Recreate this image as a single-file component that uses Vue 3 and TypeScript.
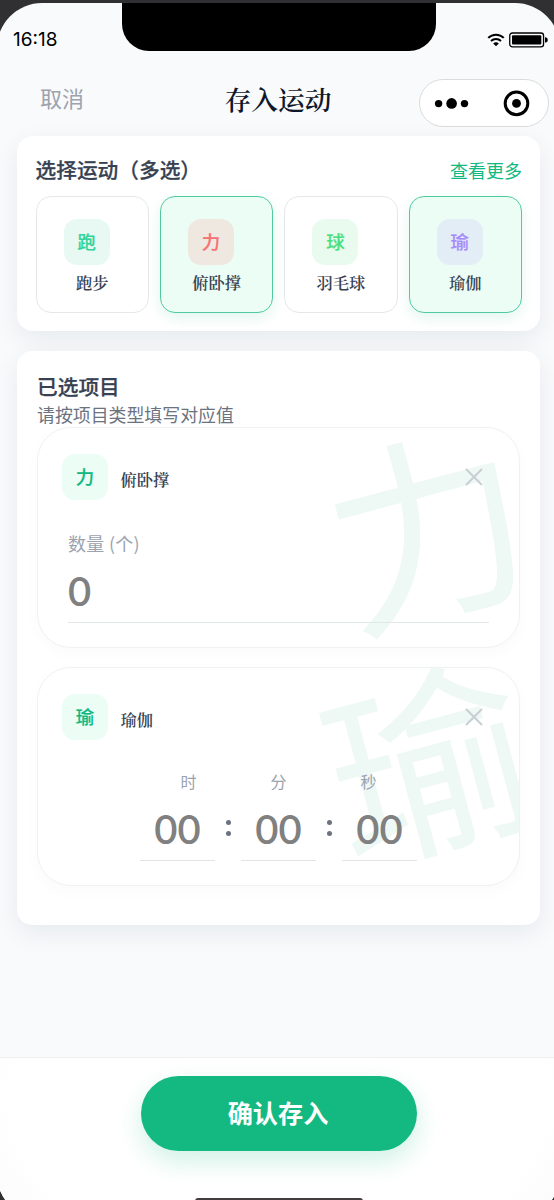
<script setup lang="ts">
import { ref } from 'vue'

interface Sport {
  glyph: string
  name: string
  tone: string
  selected: boolean
}

interface TimeUnit {
  label: string
  value: string
}

const sports = ref<Sport[]>([
  { glyph: '跑', name: '跑步', tone: 'mint', selected: false },
  { glyph: '力', name: '俯卧撑', tone: 'coral', selected: true },
  { glyph: '球', name: '羽毛球', tone: 'green', selected: false },
  { glyph: '瑜', name: '瑜伽', tone: 'violet', selected: true },
])

const units: TimeUnit[] = [
  { label: '时', value: '00' },
  { label: '分', value: '00' },
  { label: '秒', value: '00' },
]

function toggle(sport: Sport) {
  sport.selected = !sport.selected
}
</script>

<template>
  <div class="device">
    <div class="screen">
      <div class="status">
        <span class="clock">16:18</span>
        <div class="notch"></div>
        <div class="signals">
          <svg class="wifi" viewBox="0 0 18 14" width="18" height="14">
            <path d="M1.2 4.9C5.6 .6 12.4 .6 16.8 4.9" fill="none" stroke="#000" stroke-width="2" />
            <path d="M4 8C6.9 5.2 11.1 5.2 14 8" fill="none" stroke="#000" stroke-width="2" />
            <path d="M6.2 10.4C7.7 8.9 10.3 8.9 11.8 10.4L9 13.2Z" fill="#000" />
          </svg>
          <svg class="battery" viewBox="0 0 40 16" width="40" height="16">
            <rect x=".75" y="1" width="33.8" height="13.8" rx="2.6" fill="none" stroke="#000" stroke-width="1.3" />
            <rect x="3" y="3.2" width="29.3" height="9.4" rx="1" />
            <path d="M36 5.2h.8q2 .5 2 2.7t-2 2.7H36z" />
          </svg>
        </div>
      </div>

      <header class="nav">
        <span class="cancel">取消</span>
        <h1 class="title">存入运动</h1>
        <div class="capsule">
          <svg viewBox="0 0 127 46" width="127" height="46">
            <circle cx="18.6" cy="24.6" r="3.7" />
            <circle cx="31.6" cy="24.4" r="5.3" />
            <circle cx="44.5" cy="24.6" r="3.7" />
            <circle cx="96.5" cy="24.4" r="11.3" fill="none" stroke="#000" stroke-width="3" />
            <circle cx="96.5" cy="24.4" r="4.4" />
          </svg>
        </div>
      </header>

      <section class="card picker">
        <div class="picker-head">
          <h2 class="heading">选择运动（多选）</h2>
          <span class="more">查看更多</span>
        </div>
        <div class="tiles">
          <button
            v-for="sport in sports"
            :key="sport.name"
            class="tile"
            :class="{ selected: sport.selected }"
            type="button"
            @click="toggle(sport)"
          >
            <span class="badge" :class="sport.tone">{{ sport.glyph }}</span>
            <span class="tile-name">{{ sport.name }}</span>
          </button>
        </div>
      </section>

      <section class="card chosen">
        <h2 class="heading">已选项目</h2>
        <p class="hint">请按项目类型填写对应值</p>

        <article class="item count">
          <span class="watermark">力</span>
          <div class="item-head">
            <span class="badge plain">力</span>
            <span class="item-name">俯卧撑</span>
            <svg class="close" viewBox="0 0 18 18" width="18" height="18">
              <path d="M1 1L17 17M17 1L1 17" />
            </svg>
          </div>
          <div class="count-field">
            <span class="count-label">数量 (个)</span>
            <span class="number">0</span>
          </div>
        </article>

        <article class="item duration">
          <span class="watermark">瑜</span>
          <div class="item-head">
            <span class="badge plain">瑜</span>
            <span class="item-name">瑜伽</span>
            <svg class="close" viewBox="0 0 18 18" width="18" height="18">
              <path d="M1 1L17 17M17 1L1 17" />
            </svg>
          </div>
          <div class="unit-labels">
            <span v-for="unit in units" :key="unit.label">{{ unit.label }}</span>
          </div>
          <div class="unit-fields">
            <template v-for="(unit, index) in units" :key="unit.label">
              <span v-if="index > 0" class="colon"><i></i><i></i></span>
              <span class="number">{{ unit.value }}</span>
            </template>
          </div>
        </article>
      </section>

      <footer class="bottom">
        <button class="confirm" type="button">确认存入</button>
        <div class="home"></div>
      </footer>
    </div>
  </div>
</template>

<style>
body {
  margin: 0;
  background: #303033;
}
</style>

<style scoped>
* {
  box-sizing: border-box;
}

.device {
  width: 554px;
  height: 1200px;
  overflow: hidden;
  background: #303033;
  font-family: 'Noto Sans CJK SC', 'Liberation Sans', sans-serif;
}

.screen {
  display: flex;
  flex-direction: column;
  height: 1216px;
  margin: 3px -6px 0 -3px;
  padding: 0 6px 0 3px;
  overflow: hidden;
  border-radius: 45px;
  background: #f8fafc;
}

.status {
  display: grid;
  grid-template-columns: 122px 314px 118px;
  grid-template-rows: 48px;
  height: 48px;
}

.clock {
  padding-left: 13px;
  font: 400 19px/74px Inter, sans-serif;
  color: #000;
}

.notch {
  background: #000;
  border-radius: 0 0 27px 27px;
}

.signals {
  display: flex;
  justify-content: flex-end;
  gap: 4px;
  padding: 29px 5px 0 0;
}

.wifi {
  margin-top: 1px;
}

.nav {
  display: grid;
  grid-template-columns: 178px 200px 1fr;
  align-items: center;
  height: 85px;
  padding: 18px 5.5px 0 0;
}

.cancel {
  padding-left: 40px;
  margin-top: -12px;
  font-size: 22px;
  line-height: 30px;
  color: #9ca3af;
}

.title {
  margin: -8px 0 0;
  font: 600 26.7px/36px 'Noto Serif CJK SC', 'Noto Serif SC', serif;
  text-align: center;
  color: #0f172a;
}

.capsule {
  justify-self: end;
  width: 130px;
  height: 48px;
  border: 1.5px solid #dadbdc;
  border-radius: 24px;
  background: #fff;
}

.capsule svg {
  display: block;
  margin-top: -1px;
}

.card {
  width: 523px;
  margin-left: 17px;
  background: #fff;
  box-shadow: 0 8px 26px rgba(15, 23, 42, 0.07);
}

.heading {
  margin: 0;
  font-size: 20.7px;
  font-weight: 500;
  line-height: 30px;
  color: #374151;
  -webkit-text-stroke: 0.25px #374151;
}

.picker {
  height: 195px;
  padding: 17.5px 18px 0 18.5px;
  border-radius: 16px;
}

.picker-head {
  display: flex;
  justify-content: space-between;
}

.more {
  font-size: 18px;
  line-height: 32px;
  color: #10b981;
}

.tiles {
  display: grid;
  grid-template-columns: repeat(4, 1fr);
  gap: 11px;
  margin-top: 10.5px;
}

.tile {
  display: flex;
  flex-direction: column;
  align-items: center;
  height: 117px;
  padding: 21.5px 0 0;
  border: 1.5px solid #e5e7eb;
  border-radius: 15px;
  background: #fff;
}

.tile.selected {
  border-color: #4fcb9f;
  background: #ecfdf5;
  box-shadow: 0 5px 14px rgba(16, 185, 129, 0.12);
}

.badge {
  display: block;
  width: 46px;
  height: 46px;
  border-radius: 13px;
  font: 500 18.4px/44px 'Noto Sans CJK SC', sans-serif;
  text-align: center;
  -webkit-text-stroke: 0.2px currentColor;
}

.tile .badge {
  margin-right: 11px;
}

.mint {
  background: #e7f9f2;
  color: #34d399;
}

.coral {
  background: #eee8e1;
  color: #f87171;
}

.green {
  background: #e9fbef;
  color: #4ade80;
}

.violet {
  background: #e3edf5;
  color: #a78bfa;
}

.tile-name,
.item-name {
  font: 600 16.3px/24px 'Noto Serif CJK SC', 'Noto Serif SC', serif;
  color: #374151;
}

.tile-name {
  margin-top: 5px;
}

.chosen {
  height: 574px;
  margin-top: 20px;
  padding: 20px 20px 0;
  border-radius: 15px;
}

.hint {
  margin: 0;
  font-size: 17.9px;
  line-height: 26px;
  color: #6b7280;
}

.item {
  position: relative;
  overflow: hidden;
  border: 1.3px solid #f0f1f2;
  border-radius: 34px;
  background: #fff;
  box-shadow: 0 5px 16px rgba(15, 23, 42, 0.025);
}

.count {
  height: 221px;
  padding: 26px 30px 0;
}

.duration {
  height: 219px;
  margin-top: 19px;
  padding: 26px 30px 0;
}

.watermark {
  position: absolute;
  top: -9px;
  right: -6px;
  font-size: 200px;
  font-weight: 400;
  line-height: 200px;
  color: #eef8f5;
  transform: rotate(-15deg);
}

.duration .watermark {
  top: -15px;
}

.item-head {
  position: relative;
  display: flex;
  align-items: center;
  height: 46px;
  margin-left: -6px;
}

.plain {
  background: #ecfdf5;
  color: #10b981;
}

.item-name {
  flex: 1;
  margin: 3px 0 0 12.5px;
}

.close {
  margin-right: 6px;
  fill: none;
  stroke: #c9ced3;
  stroke-width: 2;
}

.count-field {
  position: relative;
  display: flex;
  flex-direction: column;
  margin-top: 30px;
  border-bottom: 1.5px solid #e2e7e8;
}

.count-label {
  font-size: 18px;
  line-height: 26px;
  letter-spacing: 0.3px;
  color: #9ca3af;
}

.number {
  font: 600 40px/54px Lato, 'Noto Sans CJK SC', sans-serif;
  color: #808080;
}

.count .number {
  height: 66px;
  padding-top: 8px;
}

.unit-labels {
  position: relative;
  display: flex;
  justify-content: center;
  margin-top: 29px;
  font-size: 16px;
  line-height: 24px;
  color: #9ca3af;
}

.unit-labels span {
  width: 90px;
  text-align: center;
}

.unit-fields {
  position: relative;
  display: flex;
  justify-content: center;
  margin-top: 8px;
}

.unit-fields .number {
  width: 75px;
  height: 60px;
  border-bottom: 1.5px solid #e2e4e7;
  line-height: 56px;
  text-align: center;
}

.colon {
  display: flex;
  flex-direction: column;
  align-items: center;
  gap: 6px;
  width: 26px;
  padding-top: 19px;
}

.colon i {
  width: 5px;
  height: 5px;
  border-radius: 50%;
  background: #6b7280;
}

.bottom {
  display: flex;
  flex-direction: column;
  align-items: center;
  height: 162px;
  margin: auto -6px 0 -3px;
  padding: 17.5px 0 0 1px;
  border-top: 1.3px solid #eeeff1;
  background: radial-gradient(ellipse 340px 220px at 50% 25%, #fff 78%, #fafafa 100%);
}

.confirm {
  flex: none;
  width: 276px;
  height: 75px;
  padding: 0 2px 3px 0;
  border: 0;
  border-radius: 38px;
  background: #14b981;
  color: #fff;
  font: 700 25.2px/72px 'Noto Sans CJK SC', sans-serif;
  box-shadow: 0 10px 26px rgba(16, 185, 129, 0.2);
}

.home {
  flex: none;
  width: 168px;
  height: 6px;
  margin-top: 47px;
  border-radius: 3px;
  background: #423c3e;
}
</style>
